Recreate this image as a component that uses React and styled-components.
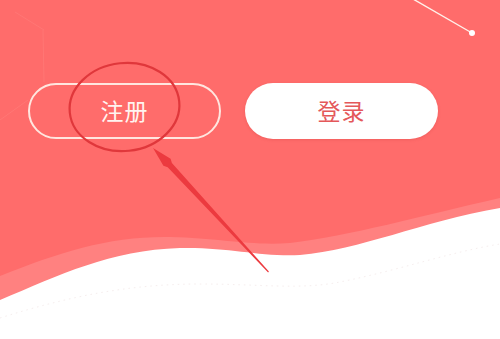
import React from "react";
import styled, { createGlobalStyle } from "styled-components";

const GlobalStyle = createGlobalStyle`
  html, body { margin: 0; padding: 0; background: #ffffff; }
  body { font-family: "Noto Sans CJK SC", "Noto Sans", sans-serif; }
`;

const Screen = styled.div`
  position: relative;
  width: 500px;
  height: 339px;
  overflow: hidden;
  background: #ff6c6b;
`;

const Backdrop = styled.svg`
  position: absolute;
  inset: 0;
  width: 500px;
  height: 339px;
`;

const ButtonRow = styled.div`
  position: relative;
  display: flex;
  gap: 24px;
  padding: 83px 0 0 28px;
`;

const PillButton = styled.button`
  box-sizing: border-box;
  width: 193px;
  height: 56px;
  border-radius: 28px;
  display: flex;
  align-items: center;
  justify-content: center;
  font-family: "Noto Sans CJK SC", "Noto Sans", sans-serif;
  font-size: 23px;
  font-weight: 400;
  letter-spacing: 1px;
  cursor: pointer;
  padding: 0 0 2px;
  border: ${(p) => (p.$variant === "outline" ? "2px solid #ffe6df" : "none")};
  background: ${(p) => (p.$variant === "outline" ? "transparent" : "#ffffff")};
  color: ${(p) => (p.$variant === "outline" ? "#fff4f0" : "#e4585a")};
  box-shadow: ${(p) => (p.$variant === "outline" ? "none" : "0 1px 3px rgba(200,60,60,0.25)")};
`;

const Annotation = styled.svg`
  position: absolute;
  inset: 0;
  width: 500px;
  height: 339px;
  pointer-events: none;
`;

export default function App() {
  return (
    <>
      <GlobalStyle />
      <Screen>
        <Backdrop viewBox="0 0 500 339">
          <line x1="413" y1="-1" x2="472" y2="33" stroke="#fff1ea" strokeWidth="1.4" />
          <circle cx="472" cy="33" r="3" fill="#ffffff" />
          <line x1="15" y1="12" x2="44" y2="30" stroke="#ff8a86" strokeWidth="0.8" opacity="0.45" />
          <line x1="43" y1="30" x2="44" y2="82" stroke="#ff8a86" strokeWidth="0.8" opacity="0.45" />
          <line x1="0" y1="120" x2="28" y2="100" stroke="#ff8a86" strokeWidth="0.8" opacity="0.45" />
          <path
            d="M0,276 C60,252 110,236 170,237 C220,238 250,246 290,243 C350,236 420,216 500,198 L500,339 L0,339 Z"
            fill="#ff8180"
          />
          <path
            d="M0,300 C60,275 110,250 180,248 C230,247 260,257 300,255 C360,250 420,222 500,208 L500,339 L0,339 Z"
            fill="#ffffff"
          />
          <path
            d="M0,318 C70,296 130,284 200,284 C260,284 300,290 340,282 C400,270 450,252 500,244"
            fill="none"
            stroke="#f6eeee"
            strokeWidth="1"
            strokeDasharray="1.5 4"
          />
        </Backdrop>
        <ButtonRow>
          <PillButton $variant="outline">注册</PillButton>
          <PillButton $variant="solid">登录</PillButton>
        </ButtonRow>
        <Annotation viewBox="0 0 500 339">
          <ellipse
            cx="124.5"
            cy="107"
            rx="55"
            ry="44"
            fill="none"
            stroke="#e0373b"
            strokeWidth="2.2"
            transform="rotate(-6 124.5 107)"
          />
          <polygon
            points="153,148 170.6,158.8 171.9,163 268.9,271.6 268.1,272.4 167.7,167.2 163.4,165.8"
            fill="#ec3a3f"
          />
        </Annotation>
      </Screen>
    </>
  );
}
